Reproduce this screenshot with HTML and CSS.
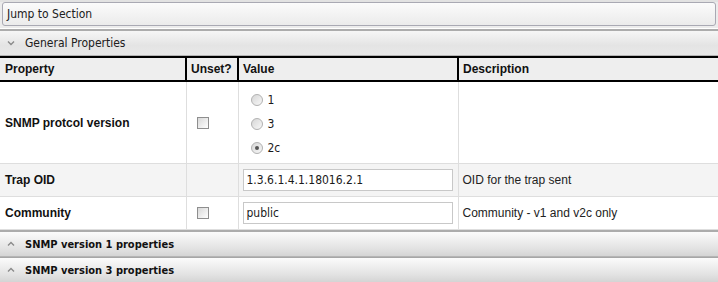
FILE: index.html
```html
<!DOCTYPE html>
<html lang="en">
<head>
    <meta charset="UTF-8">
    <title>SNMP Trap Properties</title>
    <link rel="stylesheet" href="styles.css">
</head>
<body>
    <div class="jump-bar">
        <div class="jump-field">Jump to Section</div>
    </div>

    <div class="section open">
        <svg class="chevron" width="8" height="6" viewBox="0 0 8 6"><path d="M1 1.5 L4 4.5 L7 1.5" fill="none" stroke="#8a8a8a" stroke-width="1.4"/></svg>
        <span>General Properties</span>
    </div>

    <table class="props">
        <colgroup>
            <col style="width: 186px">
            <col style="width: 52px">
            <col style="width: 220px">
            <col>
        </colgroup>
        <thead>
            <tr>
                <th>Property</th>
                <th>Unset?</th>
                <th>Value</th>
                <th>Description</th>
            </tr>
        </thead>
        <tbody>
            <tr class="tall">
                <td class="name">SNMP protcol version</td>
                <td class="unset"><span class="check"></span></td>
                <td class="value">
                    <div class="radio-list">
                        <label class="radio"><span class="dot"></span>1</label>
                        <label class="radio"><span class="dot"></span>3</label>
                        <label class="radio"><span class="dot checked"></span>2c</label>
                    </div>
                </td>
                <td class="desc"></td>
            </tr>
            <tr class="alt">
                <td class="name">Trap OID</td>
                <td class="unset"></td>
                <td class="value"><div class="text-field">1.3.6.1.4.1.18016.2.1</div></td>
                <td class="desc">OID for the trap sent</td>
            </tr>
            <tr>
                <td class="name">Community</td>
                <td class="unset"><span class="check"></span></td>
                <td class="value"><div class="text-field">public</div></td>
                <td class="desc">Community - v1 and v2c only</td>
            </tr>
        </tbody>
    </table>

    <div class="section closed">
        <svg class="chevron" width="8" height="6" viewBox="0 0 8 6"><path d="M1 4.5 L4 1.5 L7 4.5" fill="none" stroke="#8a8a8a" stroke-width="1.4"/></svg>
        <span>SNMP version 1 properties</span>
    </div>
    <div class="section closed">
        <svg class="chevron" width="8" height="6" viewBox="0 0 8 6"><path d="M1 4.5 L4 1.5 L7 4.5" fill="none" stroke="#8a8a8a" stroke-width="1.4"/></svg>
        <span>SNMP version 3 properties</span>
    </div>
</body>
</html>
```

FILE: styles.css
```css
body {
    margin: 0;
    width: 718px;
    background: #fff;
    font-family: "DejaVu Sans Condensed", "DejaVu Sans", sans-serif;
    font-stretch: condensed;
    font-size: 12px;
    color: #1a1a1a;
}
.jump-bar {
    background: #ececec;
    border-top: 2px solid #e2e2e2;
    padding: 0 2px 2px 2px;
    border-bottom: 1px solid #ffffff;
}
.jump-field {
    height: 22px;
    line-height: 22px;
    padding-left: 4px;
    border: 1px solid #a9a9b3;
    border-radius: 3px;
    background: linear-gradient(#fbfbfb, #ebebeb);
    color: #202020;
}
.section {
    display: flex;
    align-items: center;
    height: 24px;
    border-top: 2px solid #acacac;
    border-bottom: 1px solid #b4b4b4;
}
.section.open {
    background: linear-gradient(#f6f6f6, #e4e4e4 60%, #e8e8e8);
    color: #202020;
}
.section.closed {
    background: linear-gradient(#fbfbfb, #e2e2e2 70%, #d4d4d4);
    font-weight: bold;
    font-size: 11px;
    color: #111;
}
.section + .section {
    border-top: 1px solid #a6a6a6;
}
.chevron {
    margin: 0 10px 0 7px;
}
.props {
    width: 718px;
    border-collapse: collapse;
    table-layout: fixed;
    font-family: "Liberation Sans", Arial, sans-serif;
    font-stretch: normal;
}
.props th {
    height: 22px;
    background: #eeeeee;
    border: 2px solid #000;
    text-align: left;
    padding: 0 4px;
    font-size: 12px;
    font-weight: bold;
    color: #111;
}
.props td {
    border: 1px solid #dedede;
    padding: 0 4px;
    font-size: 12px;
    height: 32px;
}
.props tr:first-child td {
    border-top: none;
}
.props td:first-child,
.props th:first-child {
    border-left: none;
    padding-left: 5px;
}
.props td:last-child,
.props th:last-child {
    border-right: none;
}
.props tr.tall td {
    height: 81px;
}
.props tr.alt td {
    background: #f4f4f4;
}
.name {
    font-weight: bold;
    color: #111;
}
.props td.unset {
    padding-left: 10px;
}
.check {
    display: block;
    width: 10px;
    height: 10px;
    border: 1px solid #8e8e8e;
    background: linear-gradient(135deg, #d8d8d8, #ffffff);
}
.value {
    font-family: "DejaVu Sans Condensed", "DejaVu Sans", sans-serif;
    font-stretch: condensed;
}
.radio-list {
    display: flex;
    flex-direction: column;
    gap: 8px;
    padding: 3px 0 0 8px;
}
.radio {
    display: flex;
    align-items: center;
    gap: 5px;
    height: 16px;
}
.dot {
    width: 10px;
    height: 10px;
    border: 1px solid #b2b2b2;
    border-radius: 50%;
    background: linear-gradient(135deg, #d6d6d6, #f8f8f8);
    position: relative;
}
.dot.checked::after {
    content: "";
    position: absolute;
    left: 3px;
    top: 3px;
    width: 4px;
    height: 4px;
    border-radius: 50%;
    background: #555;
}
.text-field {
    height: 20px;
    line-height: 20px;
    width: 205px;
    padding-left: 3px;
    border: 1px solid #c8c8c8;
    background: #fff;
    color: #1a1a1a;
}
.desc {
    color: #222;
}
```
